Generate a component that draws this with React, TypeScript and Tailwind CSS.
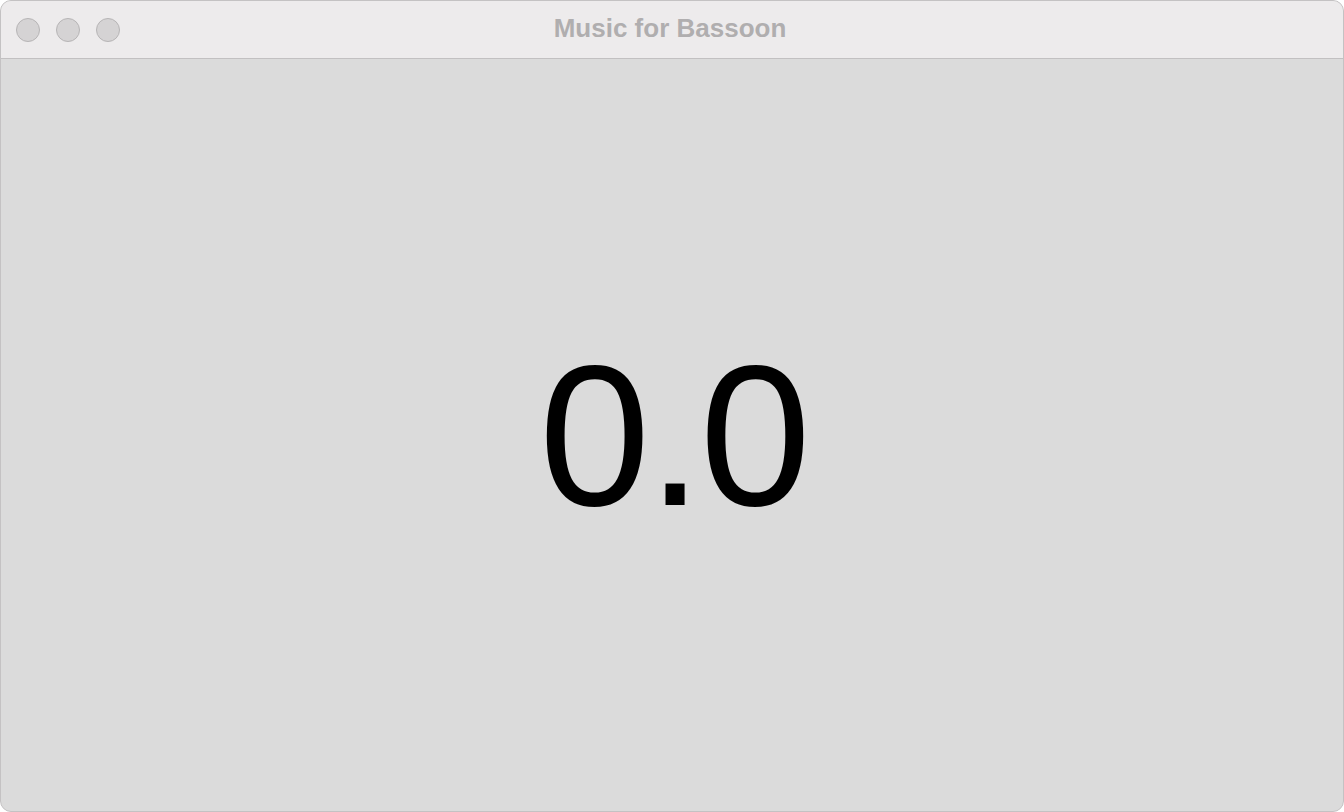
export default function App() {
  return (
    <div className="w-[1344px] h-[812px] bg-white overflow-hidden">
      <div className="h-full flex flex-col rounded-[11px] overflow-hidden border border-[#c4c2c3] bg-[#dbdbdb]">
        {/* Title bar */}
        <div className="relative h-[58px] shrink-0 bg-[#edebec] border-b border-[#c2c0c1] flex items-center justify-center">
          <div className="absolute left-[15px] top-[17px] flex gap-[16px]">
            <span className="w-[24px] h-[24px] rounded-full bg-[#d5d3d4] border border-[#b7b5b6]" />
            <span className="w-[24px] h-[24px] rounded-full bg-[#d5d3d4] border border-[#b7b5b6]" />
            <span className="w-[24px] h-[24px] rounded-full bg-[#d5d3d4] border border-[#b7b5b6]" />
          </div>
          <span className="ml-[-4px] mt-[-2px] text-[26px] font-bold text-[#b0aeaf] font-['Liberation_Sans',sans-serif]">
            Music for Bassoon
          </span>
        </div>
        {/* Content */}
        <div className="flex-1 flex items-center justify-center">
          <span className="text-[200px] leading-none tracking-[-3px] pl-[3px] text-black font-['Liberation_Sans',sans-serif] mt-[2px]">
            0.0
          </span>
        </div>
      </div>
    </div>
  );
}
